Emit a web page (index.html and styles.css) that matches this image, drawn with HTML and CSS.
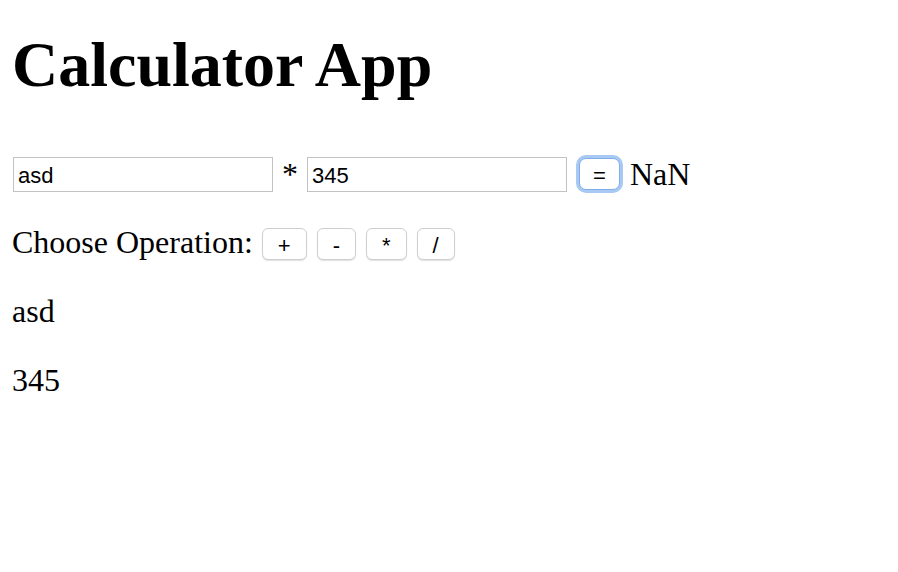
FILE: index.html
```html
<!DOCTYPE html>
<html>
<head>
<meta charset="utf-8">
<title>Calculator App</title>
<link rel="stylesheet" href="styles.css">
</head>
<body>
<div class="app">
  <h1 class="title">Calculator App</h1>
  <div class="calc-row">
    <input class="num-input" type="text" value="asd">
    <span class="op-sign">*</span>
    <input class="num-input" type="text" value="345">
    <button class="btn btn-eq">=</button>
    <span class="result">NaN</span>
  </div>
  <div class="op-row">
    <span class="op-label">Choose Operation:</span>
    <button class="btn btn-op">+</button>
    <button class="btn btn-op">-</button>
    <button class="btn btn-op">*</button>
    <button class="btn btn-op">/</button>
  </div>
  <p class="echo">asd</p>
  <p class="echo">345</p>
</div>
</body>
</html>
```
FILE: styles.css
```css
html, body {
  margin: 0;
  background: #ffffff;
}

body {
  padding: 28px 12px 0;
  font-family: "Liberation Serif", "Times New Roman", serif;
  font-size: 32px;
  color: #000000;
}

.app {
  display: flex;
  flex-direction: column;
  align-items: flex-start;
}

.title {
  margin: 0;
  font-size: 64px;
  font-weight: bold;
  line-height: 73px;
}

.calc-row {
  display: flex;
  align-items: center;
  height: 36px;
  line-height: 36px;
  margin-top: 55px;
}

.num-input {
  box-sizing: border-box;
  width: 260px;
  height: 35px;
  margin: 0 0 0 1px;
  padding: 4px 4px 0;
  border: 1px solid #c2c2c2;
  border-radius: 0;
  font-family: "Liberation Sans", Arial, sans-serif;
  font-size: 22px;
  color: #000000;
  background: #ffffff;
  outline: none;
}

.op-sign {
  margin: 0 8px 0 9px;
}

.btn {
  box-sizing: border-box;
  height: 32px;
  padding: 4px 15px 0;
  border: 1px solid #cfcfcf;
  border-radius: 6px;
  background: #ffffff;
  box-shadow: 0 1px 1px rgba(0, 0, 0, 0.12);
  font-family: "Liberation Sans", Arial, sans-serif;
  font-size: 22px;
  line-height: 26px;
  color: #000000;
}

.btn-eq {
  width: 41px;
  padding: 4px 0 0;
  margin-left: 12px;
  border-color: #80aeea;
  border-radius: 7px;
  box-shadow: 0 0 0 3px rgba(130, 178, 240, 0.7);
}

.result {
  margin-left: 10px;
}

.op-row {
  display: flex;
  align-items: flex-end;
  height: 36px;
  line-height: 36px;
  margin-top: 32px;
}

.op-label {
  margin-right: 9px;
}

.btn-op + .btn-op {
  margin-left: 10px;
}

.echo {
  margin: 33px 0 0;
  line-height: 36px;
}
```
